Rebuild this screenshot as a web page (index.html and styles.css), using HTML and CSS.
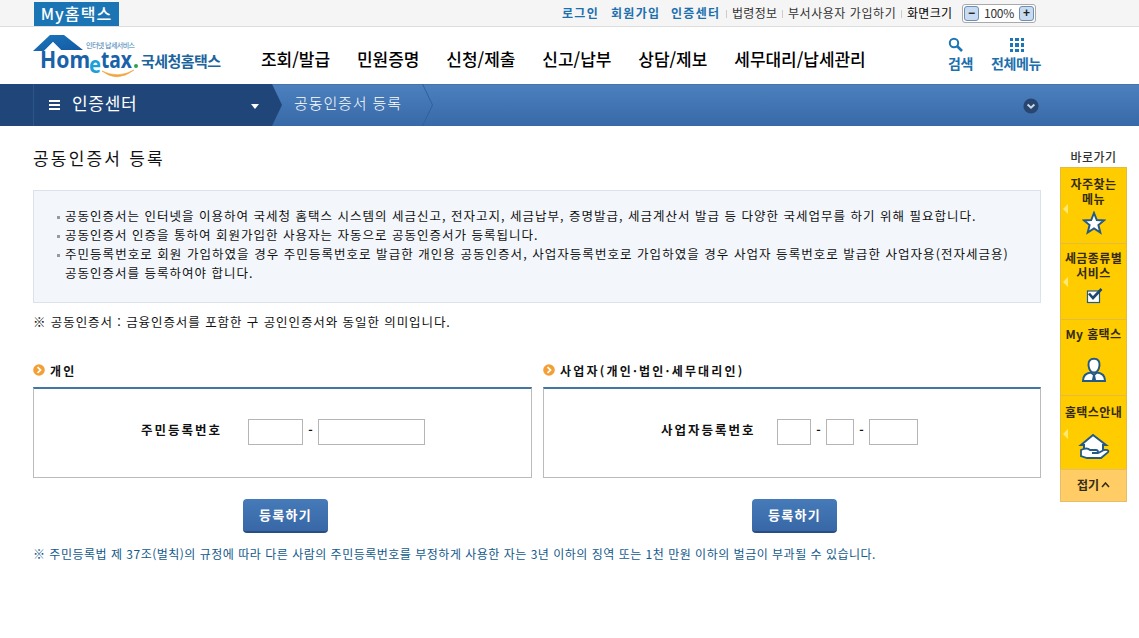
FILE: index.html
```
<!DOCTYPE html>
<html lang="ko">
<head>
	<meta charset="UTF-8">
	<title>공동인증서 등록</title>
	<link rel="stylesheet" href="styles.css">
</head>
<body>
	<div class="top">
		<a class="my">My홈택스</a>
		<ul class="util">
			<li class="on">로그인</li>
			<li class="on">회원가입</li>
			<li class="on center">인증센터</li>
			<li class="bar">법령정보</li>
			<li class="bar dept">부서사용자 가입하기</li>
			<li class="bar size">화면크기</li>
		</ul>
		<div class="zoom"><button>−</button><span>100%</span><button>+</button></div>
	</div>
	<div class="header">
		<svg class="logo" width="190" height="50" viewBox="0 0 190 50">
			<defs>
				<linearGradient id="roof" x1="0" y1="0" x2="1" y2="1"><stop offset="0" stop-color="#1a78bb"/><stop offset="1" stop-color="#1458a4"/></linearGradient>
			</defs>
			<path d="M0 18L17 2L31 2L50 17L28 17L20 9L11 18Z" fill="url(#roof)"/>
			<path d="M11 18L20 9L28 17Z" fill="#fff"/>
			<text class="logo-sub" x="53" y="15" textLength="49">인터넷 납세서비스</text>
			<text class="logo-en" x="7" y="35" textLength="50" lengthAdjust="spacingAndGlyphs">Hom</text>
			<text class="logo-en logo-e" x="56" y="40" textLength="12" lengthAdjust="spacingAndGlyphs">e</text>
			<text class="logo-en" x="68" y="35" textLength="31" lengthAdjust="spacingAndGlyphs">tax</text>
			<circle cx="103" cy="33" r="2" fill="#35a04a"/>
			<path d="M69 38Q84 50 101 37Q85 46 69 38Z" fill="#f2a33c" stroke="#f2a33c" stroke-width=".6"/>
			<text class="logo-ko" x="108" y="34" textLength="80">국세청홈택스</text>
		</svg>
		<ul class="nav">
			<li>조회/발급</li>
			<li>민원증명</li>
			<li>신청/제출</li>
			<li>신고/납부</li>
			<li>상담/제보</li>
			<li>세무대리/납세관리</li>
		</ul>
		<div class="tools">
			<div class="tool">
				<svg width="16" height="16" viewBox="0 0 16 16"><circle cx="6" cy="6" r="4.2" fill="none" stroke="#1c75b5" stroke-width="2"/><path d="M9 9L14 14" stroke="#1c75b5" stroke-width="2.6"/></svg>
				<span>검색</span>
			</div>
			<div class="tool">
				<svg width="16" height="16" viewBox="0 0 16 16" fill="#1c75b5"><path d="M1 1h3v3H1zM6 1h4v3H6zM12 1h3v3h-3zM1 6h3v4H1zM6 6h4v4H6zM12 6h3v4h-3zM1 12h3v3H1zM6 12h4v3H6zM12 12h3v3h-3z"/></svg>
				<span>전체메뉴</span>
			</div>
		</div>
	</div>
	<div class="location">
		<div class="depth1">
			<i class="burger"></i>
			<span>인증센터</span>
			<i class="down"></i>
		</div>
		<svg class="arrow" width="11" height="42" viewBox="0 0 11 42"><path d="M0 0L10 21L0 42Z" fill="#204679"/></svg>
		<span class="depth2">공동인증서 등록</span>
		<svg class="line" width="12" height="42" viewBox="0 0 12 42"><path d="M.5 0L10.5 21L.5 42" fill="none" stroke="#30609f"/></svg>
		<svg class="more" width="16" height="16" viewBox="0 0 16 16"><circle cx="8" cy="8" r="7.6" fill="#28466f"/><path d="M4.6 6.5L8 9.7L11.4 6.5" fill="none" stroke="#c9d9ec" stroke-width="2"/></svg>
	</div>
	<div class="wrap">
		<div class="content">
			<h1>공동인증서 등록</h1>
			<ul class="info">
				<li>공동인증서는 인터넷을 이용하여 국세청 홈택스 시스템의 세금신고, 전자고지, 세금납부, 증명발급, 세금계산서 발급 등 다양한 국세업무를 하기 위해 필요합니다.</li>
				<li>공동인증서 인증을 통하여 회원가입한 사용자는 자동으로 공동인증서가 등록됩니다.</li>
				<li><span>주민등록번호로 회원 가입하였을 경우 주민등록번호로 발급한 개인용 공동인증서, 사업자등록번호로 가입하였을 경우 사업자 등록번호로 발급한 사업자용(전자세금용)</span><br>공동인증서를 등록하여야 합니다.</li>
			</ul>
			<p class="note">※ 공동인증서 : 금융인증서를 포함한 구 공인인증서와 동일한 의미입니다.</p>
			<div class="forms">
				<div class="form">
					<h2><svg width="12" height="12" viewBox="0 0 12 12"><circle cx="6" cy="6" r="5.8" fill="#f2a036"/><path d="M4.5 3.2L7.5 6L4.5 8.8" fill="none" stroke="#fff" stroke-width="1.7"/></svg>개인</h2>
					<div class="box person">
						<label>주민등록번호</label>
						<input type="text" class="w55"><b>-</b><input type="text" class="w107">
					</div>
					<button class="btn">등록하기</button>
				</div>
				<div class="form biz">
					<h2><svg width="12" height="12" viewBox="0 0 12 12"><circle cx="6" cy="6" r="5.8" fill="#f2a036"/><path d="M4.5 3.2L7.5 6L4.5 8.8" fill="none" stroke="#fff" stroke-width="1.7"/></svg>사업자(개인·법인·세무대리인)</h2>
					<div class="box company">
						<label>사업자등록번호</label>
						<input type="text" class="w34"><b>-</b><input type="text" class="w28"><b>-</b><input type="text" class="w49">
					</div>
					<button class="btn">등록하기</button>
				</div>
			</div>
			<p class="warn">※ 주민등록법 제 37조(벌칙)의 규정에 따라 다른 사람의 주민등록번호를 부정하게 사용한 자는 3년 이하의 징역 또는 1천 만원 이하의 벌금이 부과될 수 있습니다.</p>
		</div>
		<div class="quick">
			<h3>바로가기</h3>
			<div class="item q1 sub">
				자주찾는<br>메뉴
				<svg width="24" height="24" viewBox="0 0 24 24"><path d="M12 2L14.8 9L22 9.4L16.4 14L18.3 21.5L12 17.4L5.7 21.5L7.6 14L2 9.4L9.2 9Z" fill="#fff" stroke="#245a86" stroke-width="2"/></svg>
			</div>
			<div class="item q2 sub">
				세금종류별<br>서비스
				<svg width="18" height="18" viewBox="0 0 18 18"><rect x="2.5" y="4" width="12" height="11.5" fill="#fff" stroke="#245a86" stroke-width="1.2"/><path d="M4 6.500L8 11L16.500 2" fill="none" stroke="#1e4770" stroke-width="2.600"/></svg>
			</div>
			<div class="item q3">
				My 홈택스
				<svg width="26" height="26" viewBox="0 0 26 26"><path d="M2 24C2 18 5 16 10 15.5L13 18L16 15.5C21 16 24 18 24 24Z" fill="#fff" stroke="#245a86" stroke-width="2"/><path d="M13 1.8C17 1.8 19 4.5 18.5 8.5C18 12.5 16 15.5 13 15.5S8 12.5 7.5 8.5C7 4.5 9 1.8 13 1.8Z" fill="#fff" stroke="#245a86" stroke-width="2"/><path d="M12 18h2l1 5h-4z" fill="#245a86"/></svg>
			</div>
			<div class="item q4 sub">
				홈택스안내
				<svg width="32" height="28" viewBox="0 0 32 28"><path d="M3 13L15 3L28 13H25V23H6V13Z" fill="#fff" stroke="#245a86" stroke-width="2"/><path d="M3 18C7 16 10 16 12 18H18C21 18 20 21 18 21H14H20L26 18C31 17 31 20 29 21L23 26H9L3 24Z" fill="#fff" stroke="#245a86" stroke-width="1.8"/></svg>
			</div>
			<div class="fold">접기<svg width="9" height="6" viewBox="0 0 9 6"><path d="M1 5L4.5 1L8 5" fill="none" stroke="#332b12" stroke-width="1.5"/></svg></div>
		</div>
	</div>
</body>
</html>
```
FILE: styles.css
```
*{
	margin: 0;
	padding: 0;
	box-sizing: border-box;
}
body{
	font: 12px/18px "Noto Sans CJK KR", sans-serif;
	color: #111;
	background: #fff;
	overflow: hidden;
}
ul{
	list-style: none;
}
svg{
	display: block;
	flex: none;
}
li, span, p, h1, h2, h3, label{
	white-space: nowrap;
}
.top{
	height: 27px;
	display: flex;
	background: #f5f5f5;
	border-bottom: 1px solid #ddd;
	padding-left: 34px;
}
.my{
	width: 85px;
	height: 24px;
	margin-top: 2px;
	background: #1b75b5;
	color: #fff;
	font-size: 16px;
	line-height: 22px;
	font-weight: 500;
	letter-spacing: 1.1px;
	text-align: center;
}
.util{
	display: flex;
	align-items: flex-start;
	margin-left: 443px;
	padding-top: 4px;
	width: 400px;
}
.util li{
	letter-spacing: .3px;
	color: #333;
}
.util .on{
	width: 49px;
	color: #1b70ad;
	font-weight: bold;
	letter-spacing: 1.3px;
}
.util .on + .on{
	width: 60px;
}
.util .on + .center{
	width: 55px;
}
.util .bar{
	display: flex;
	align-items: center;
	width: 56px;
}
.util .bar:before{
	content: "";
	width: 1px;
	height: 8px;
	margin: 2px 5px 0 0;
	background: #ccc;
}
.util .dept{
	width: 119px;
	letter-spacing: .55px;
}
.util .size{
	color: #000;
}
.zoom{
	width: 74px;
	height: 19px;
	margin-top: 4px;
	border: 1px solid #aaa;
	border-radius: 3px;
	background: #fff;
	display: flex;
	justify-content: space-between;
	align-items: center;
	padding: 0 1px;
	color: #333;
}
.zoom span{
	letter-spacing: -.3px;
	padding-bottom: 2px;
}
.zoom button{
	width: 15px;
	height: 15px;
	border: 1px solid #6d8fb4;
	border-radius: 3px;
	background: #c8dbf0;
	font: bold 12px/11px "Liberation Sans", sans-serif;
	color: #222;
}
.header{
	height: 57px;
	display: flex;
	padding-left: 33px;
}
.logo{
	margin-top: 6px;
}
.logo-sub{
	font-size: 7px;
	fill: #3579af;
}
.logo-en{
	font: bold 24px "Noto Sans", sans-serif;
	fill: #1961a8;
}
.logo-e{
	fill: #1ba0d8;
}
.logo-ko{
	font-size: 15px;
	font-weight: bold;
	fill: #1d639d;
}
.nav{
	display: flex;
	gap: 27px;
	margin-left: 38px;
	padding-top: 19px;
	width: 687px;
}
.nav li{
	font-size: 17px;
	line-height: 26px;
	font-weight: 500;
	letter-spacing: -.05px;
	color: #000;
}
.tools{
	display: flex;
	gap: 18px;
	padding-top: 10px;
}
.tool{
	color: #1c70ad;
	font-size: 14px;
	line-height: 20px;
	font-weight: bold;
	letter-spacing: -.4px;
}
.tool svg{
	margin: 0;
}
.tool + .tool svg{
	margin-left: 18px;
}
.location{
	height: 42px;
	display: flex;
	align-items: center;
	background: linear-gradient(#4474ad 1px, #4b80bd 1px, #3869a8);
}
.depth1{
	width: 272px;
	height: 42px;
	display: flex;
	align-items: center;
	background: #204679;
	color: #fff;
	font-size: 17px;
	letter-spacing: .7px;
	padding-left: 33px;
}
.depth1 span{
	width: 179px;
	padding-bottom: 4px;
}
.burger{
	width: 39px;
	height: 42px;
	border-left: 1px solid #2d5587;
	background: linear-gradient(#fff 2px, transparent 2px, transparent 4px, #fff 4px, #fff 6px, transparent 6px, transparent 8px, #fff 8px, #fff 10px) no-repeat 15px 16px / 11px 10px;
}
.down{
	margin-top: 2px;
	border: 4px solid transparent;
	border-top: 5px solid #fff;
	border-bottom: 0;
}
.depth2{
	width: 128px;
	margin-left: 11px;
	padding-bottom: 5px;
	color: #fff;
	font-size: 15px;
	letter-spacing: .9px;
	font-weight: 300;
}
.more{
	margin-left: 589px;
	margin-top: 2px;
}
.wrap{
	display: flex;
	padding-left: 33px;
}
.content{
	width: 1008px;
}
h1{
	margin: 19px 0 20px;
	font-size: 17px;
	line-height: 25px;
	letter-spacing: 2.2px;
	font-weight: 400;
}
.info{
	height: 113px;
	border: 1px solid #dce2ec;
	background: #f3f7fc;
	padding: 15px 0 0 31px;
	font-size: 12.5px;
	line-height: 19px;
	letter-spacing: 1px;
}
.info li:before{
	content: "";
	float: left;
	width: 3px;
	height: 3px;
	margin: 10px 0 0 -8px;
	background: #999;
}
.info span{
	letter-spacing: 1.04px;
}
.note{
	margin-top: 10px;
	font-size: 12.5px;
	letter-spacing: .92px;
}
.forms{
	display: flex;
	gap: 11px;
	margin-top: 29px;
}
.form{
	width: 499px;
}
.biz{
	width: 498px;
}
h2{
	height: 27px;
	display: flex;
	gap: 5px;
	padding-top: 4px;
	font-size: 12px;
	line-height: 13px;
	letter-spacing: 2.2px;
}
.box{
	height: 91px;
	border: 1px solid #bbb;
	border-top: 2px solid #43779f;
	display: flex;
	padding: 30px 0 0 107px;
}
.box label{
	width: 107px;
	line-height: 26px;
	font-size: 12.5px;
	font-weight: bold;
	letter-spacing: 2px;
	margin-top: -2px;
}
.company{
	padding-left: 117px;
}
.company label{
	width: 116px;
}
.box b{
	width: 15px;
	text-align: center;
	line-height: 22px;
}
.box input{
	height: 26px;
	border: 1px solid #b5b5b5;
}
.w55{
	width: 55px;
}
.w107{
	width: 107px;
}
.w34{
	width: 34px;
}
.w28{
	width: 28px;
}
.w49{
	width: 49px;
}
.btn{
	display: block;
	width: 85px;
	height: 34px;
	margin: 21px 0 0 210px;
	border: 0;
	border-bottom: 2px solid #284e83;
	border-radius: 4px;
	background: linear-gradient(#467ab8, #3867a6);
	color: #fff;
	font: bold 13px/30px "Noto Sans CJK KR", sans-serif;
	letter-spacing: 1.3px;
}
.biz .btn{
	margin-left: 209px;
}
.warn{
	margin-top: 12px;
	color: #12598c;
	letter-spacing: .5px;
}
.quick{
	width: 67px;
	margin: 22px 0 0 19px;
	text-align: center;
	color: #332b12;
}
.quick h3{
	height: 19px;
	font-size: 12px;
	line-height: 17px;
	font-weight: 500;
	letter-spacing: .4px;
	color: #333;
}
.item{
	position: relative;
	height: 76px;
	background: #fc0;
	border: 1px solid #e3bb41;
	border-bottom: 0;
	font-size: 12px;
	line-height: 15px;
	font-weight: bold;
	letter-spacing: .4px;
	white-space: nowrap;
	padding-top: 8px;
}
.item svg{
	margin: 5px auto 0;
}
.q2{
	padding-top: 6px;
}
.q2 svg{
	margin-top: 7px;
}
.q3{
	padding-top: 6px;
}
.q3 svg{
	margin-top: 16px;
}
.q4{
	height: 74px;
}
.q4 svg{
	margin-top: 13px;
}
.sub:before{
	content: "";
	position: absolute;
	left: 2px;
	top: 36px;
	border: 5px solid transparent;
	border-right-color: #ffe873;
	border-left: 0;
}
.q2:before, .q4:before{
	top: 33px;
}
.fold{
	height: 33px;
	display: flex;
	justify-content: center;
	align-items: center;
	gap: 2px;
	padding-bottom: 2px;
	background: #fc6;
	border: 1px solid #e5bd6b;
	font-weight: bold;
}
```
